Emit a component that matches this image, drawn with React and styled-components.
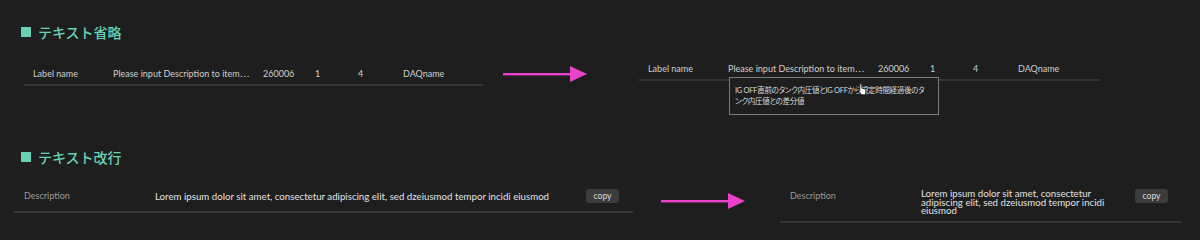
import React from "react";
import styled, { createGlobalStyle } from "styled-components";

const FONT = `Lato, "Noto Sans CJK JP", sans-serif`;

const Global = createGlobalStyle`
  html, body { margin: 0; padding: 0; background: #1e1e1e; }
  body {
    width: 1200px;
    height: 240px;
    overflow: hidden;
    font-family: ${FONT};
  }
`;

const Section = styled.section`
  height: ${(p) => p.$h}px;
  padding-top: 22px;
  box-sizing: border-box;
`;

const Title = styled.h2`
  margin: 0 0 0 21px;
  display: flex;
  align-items: center;
  gap: 7px;
  font-family: "Noto Sans CJK JP", sans-serif;
  font-size: 14px;
  line-height: 20px;
  font-weight: 500;
  color: #68d1b4;
`;

const Square = styled.span`
  width: 10px;
  height: 10px;
  background: currentColor;
`;

const Compare = styled.div`
  display: flex;
  align-items: flex-start;
  margin-top: ${(p) => p.$mt}px;
`;

const Table = styled.div`
  position: relative;
  flex: none;
  width: ${(p) => p.$w}px;
  margin-left: ${(p) => p.$ml}px;
  margin-top: ${(p) => p.$mt || 0}px;
`;

const DataRow = styled.div`
  display: flex;
  align-items: center;
  height: 22px;
  padding-left: 9px;
  border-bottom: 2px solid #363636;
  font-size: 9px;
  color: #cfcfcf;
  white-space: nowrap;
`;

const Cell = styled.div`
  flex: none;
  width: ${(p) => p.$w}px;
  overflow: hidden;
`;

const ArrowSvg = styled.svg`
  flex: none;
  display: block;
  margin-left: ${(p) => p.$ml}px;
  margin-top: ${(p) => p.$mt}px;
`;

const Tooltip = styled.div`
  position: absolute;
  left: 90px;
  top: 20px;
  width: 210px;
  box-sizing: border-box;
  padding: 7px 13px 7px 5px;
  border: 1px solid #7a7a7a;
  background: #1e1e1e;
  color: #dcdcdc;
  font-size: 7.5px;
  line-height: 11px;
  letter-spacing: -0.3px;
  font-feature-settings: "palt";
`;

const Cursor = styled.svg`
  position: absolute;
  left: 127px;
  top: 5px;
`;

const DescRow = styled.div`
  display: flex;
  align-items: flex-start;
  padding: 0 14px ${(p) => p.$pb}px 10px;
  border-bottom: 2px solid #363636;
`;

const DescLabel = styled.div`
  flex: none;
  width: 131px;
  font-size: 9px;
  line-height: 20px;
  color: #9b9b9b;
`;

const DescText = styled.div`
  font-size: 9.7px;
  color: #e2e2e2;
  ${(p) =>
    p.$wrap
      ? `width: 200px; line-height: 8.7px; margin-top: 3px;`
      : `white-space: nowrap; line-height: 20px;`}
`;

const CopyButton = styled.button`
  flex: none;
  margin-left: auto;
  margin-top: 3px;
  width: 33px;
  height: 14px;
  padding: 0;
  border: 0;
  border-radius: 3px;
  background: #3c3c3c;
  color: #dddddd;
  font-family: ${FONT};
  font-size: 8.5px;
  line-height: 14px;
`;

const Arrow = ({ ml, mt }) => (
  <ArrowSvg $ml={ml} $mt={mt} width="84" height="18" viewBox="0 0 84 18">
    <rect x="0" y="8" width="70" height="2.4" fill="#ea42c8" />
    <polygon points="67,1 84,9 67,17" fill="#ea42c8" />
  </ArrowSvg>
);

const cols = [80, 150, 52, 43, 45, 60];
const values = [
  "Label name",
  "Please input Description to item⋯",
  "260006",
  "1",
  "4",
  "DAQname",
];

const Row = () => (
  <DataRow>
    {values.map((v, i) => (
      <Cell key={i} $w={cols[i]}>
        {v}
      </Cell>
    ))}
  </DataRow>
);

const lorem =
  "Lorem ipsum dolor sit amet, consectetur adipiscing elit, sed dzeiusmod tempor incidi eiusmod";

export default function App() {
  return (
    <>
      <Global />
      <Section $h={125}>
        <Title>
          <Square />
          テキスト省略
        </Title>
        <Compare $mt={15}>
          <Table $w={459} $ml={24} $mt={5}>
            <Row />
          </Table>
          <Arrow ml={20} mt={8} />
          <Table $w={460} $ml={52}>
            <Row />
            <Tooltip>
              IG OFF直前のタンク内圧値とIG OFFから規定時間経過後のタンク内圧値との差分値
              <Cursor width="11" height="13" viewBox="0 0 16 19">
                <path
                  d="M5.5 1.2c.8 0 1.4.6 1.4 1.4v5.2l.4-.1c.7-.2 1.3.2 1.5.7.5-.3 1.3-.2 1.6.4.5-.2 1.2 0 1.5.6l.3.6c.5 1 .7 2.1.6 3.2l-.2 1.7c-.1.9-.5 1.7-1.1 2.3H6.2L3 12.3c-.5-.6-.5-1.4 0-1.9.5-.4 1.2-.4 1.7 0l-.6.6V2.6c0-.8.6-1.4 1.4-1.4z"
                  fill="#fff"
                  stroke="#000"
                  strokeWidth="1"
                />
              </Cursor>
            </Tooltip>
          </Table>
        </Compare>
      </Section>
      <Section $h={115}>
        <Title>
          <Square />
          テキスト改行
        </Title>
        <Compare $mt={19}>
          <Table $w={619} $ml={14}>
            <DescRow $pb={5}>
              <DescLabel>Description</DescLabel>
              <DescText>{lorem}</DescText>
              <CopyButton>copy</CopyButton>
            </DescRow>
          </Table>
          <Arrow ml={28} mt={6} />
          <Table $w={402} $ml={35}>
            <DescRow $pb={6}>
              <DescLabel>Description</DescLabel>
              <DescText $wrap>{lorem}</DescText>
              <CopyButton>copy</CopyButton>
            </DescRow>
          </Table>
        </Compare>
      </Section>
    </>
  );
}
